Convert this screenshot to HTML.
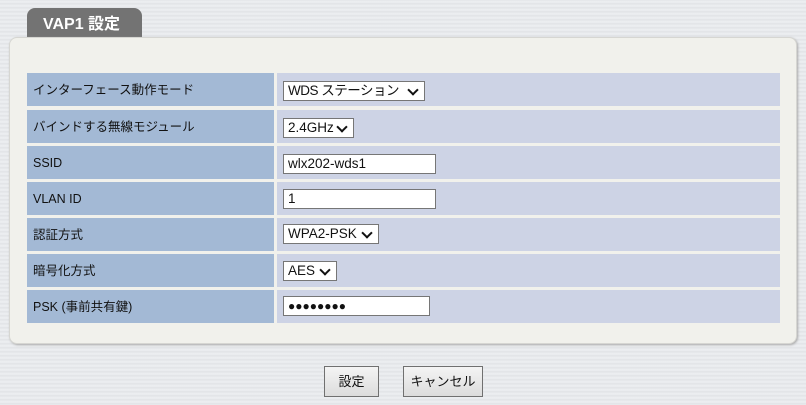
<!DOCTYPE html>
<html><head><meta charset="utf-8"><style>
*{box-sizing:border-box;margin:0;padding:0}
body{width:806px;height:405px;overflow:hidden;background:repeating-linear-gradient(180deg,#e3e5e8 0,#eef0f2 2px,#dfe1e4 4px);font-family:"Liberation Sans","Noto Sans CJK JP",sans-serif;font-size:13px;color:#111;position:relative;line-height:15px}
.tab{position:absolute;left:27px;top:8px;width:115px;height:30px;background:#737373;border-radius:8px 8px 0 0;color:#fff;font-weight:bold;font-size:16px;padding:8px 0 0 16px;line-height:18px}
.panel{position:absolute;left:9px;top:37px;width:788px;height:307px;background:#f1f1ec;border-radius:8px;box-shadow:1px 1px 2px #aaa;border:1px solid #d6d6d2}
.row{position:absolute;left:27px;width:753px;height:33px}
.l{position:absolute;left:0;top:0;width:247px;height:33px;background:#a3b9d5;padding:1px 0 0 6px;font-size:12.5px;line-height:33px}
.v{position:absolute;left:250px;top:0;width:503px;height:33px;background:#cdd3e5}
.f{position:absolute;left:6px;background:#fff;border:1px solid #767676;height:20px;font-size:13.5px;padding:0 4px;line-height:18px;white-space:nowrap;overflow:hidden}
.sel{padding-right:20px}
.sel::after{content:"";position:absolute;right:7px;top:4px;width:6px;height:6px;border-right:2px solid #111;border-bottom:2px solid #111;transform:rotate(45deg)}
.btn{position:absolute;top:366px;height:31px;border:1px solid #707070;background:linear-gradient(#f4f4f4,#dcdcdc);font-size:13px;text-align:center;line-height:29px}
</style></head><body>
<div class="tab">VAP1 設定</div>
<div class="panel"></div>
<div class="row" style="top:73px"><div class="l">インターフェース動作モード</div><div class="v"><div class="f sel" style="top:8px;width:142px;letter-spacing:-0.5px">WDS ステーション</div></div></div>
<div class="row" style="top:110px"><div class="l">バインドする無線モジュール</div><div class="v"><div class="f sel" style="top:8px;width:71px">2.4GHz</div></div></div>
<div class="row" style="top:146px"><div class="l">SSID</div><div class="v"><div class="f" style="top:8px;width:153px">wlx202-wds1</div></div></div>
<div class="row" style="top:182px"><div class="l">VLAN ID</div><div class="v"><div class="f" style="top:7px;width:153px">1</div></div></div>
<div class="row" style="top:218px"><div class="l">認証方式</div><div class="v"><div class="f sel" style="top:6px;width:96px">WPA2-PSK</div></div></div>
<div class="row" style="top:254px"><div class="l">暗号化方式</div><div class="v"><div class="f sel" style="top:7px;width:54px">AES</div></div></div>
<div class="row" style="top:290px"><div class="l">PSK (事前共有鍵)</div><div class="v"><div class="f" style="top:6px;width:147px;font-size:12px">●●●●●●●●</div></div></div>
<div class="btn" style="left:324px;width:55px">設定</div>
<div class="btn" style="left:403px;width:80px">キャンセル</div>
</body></html>
